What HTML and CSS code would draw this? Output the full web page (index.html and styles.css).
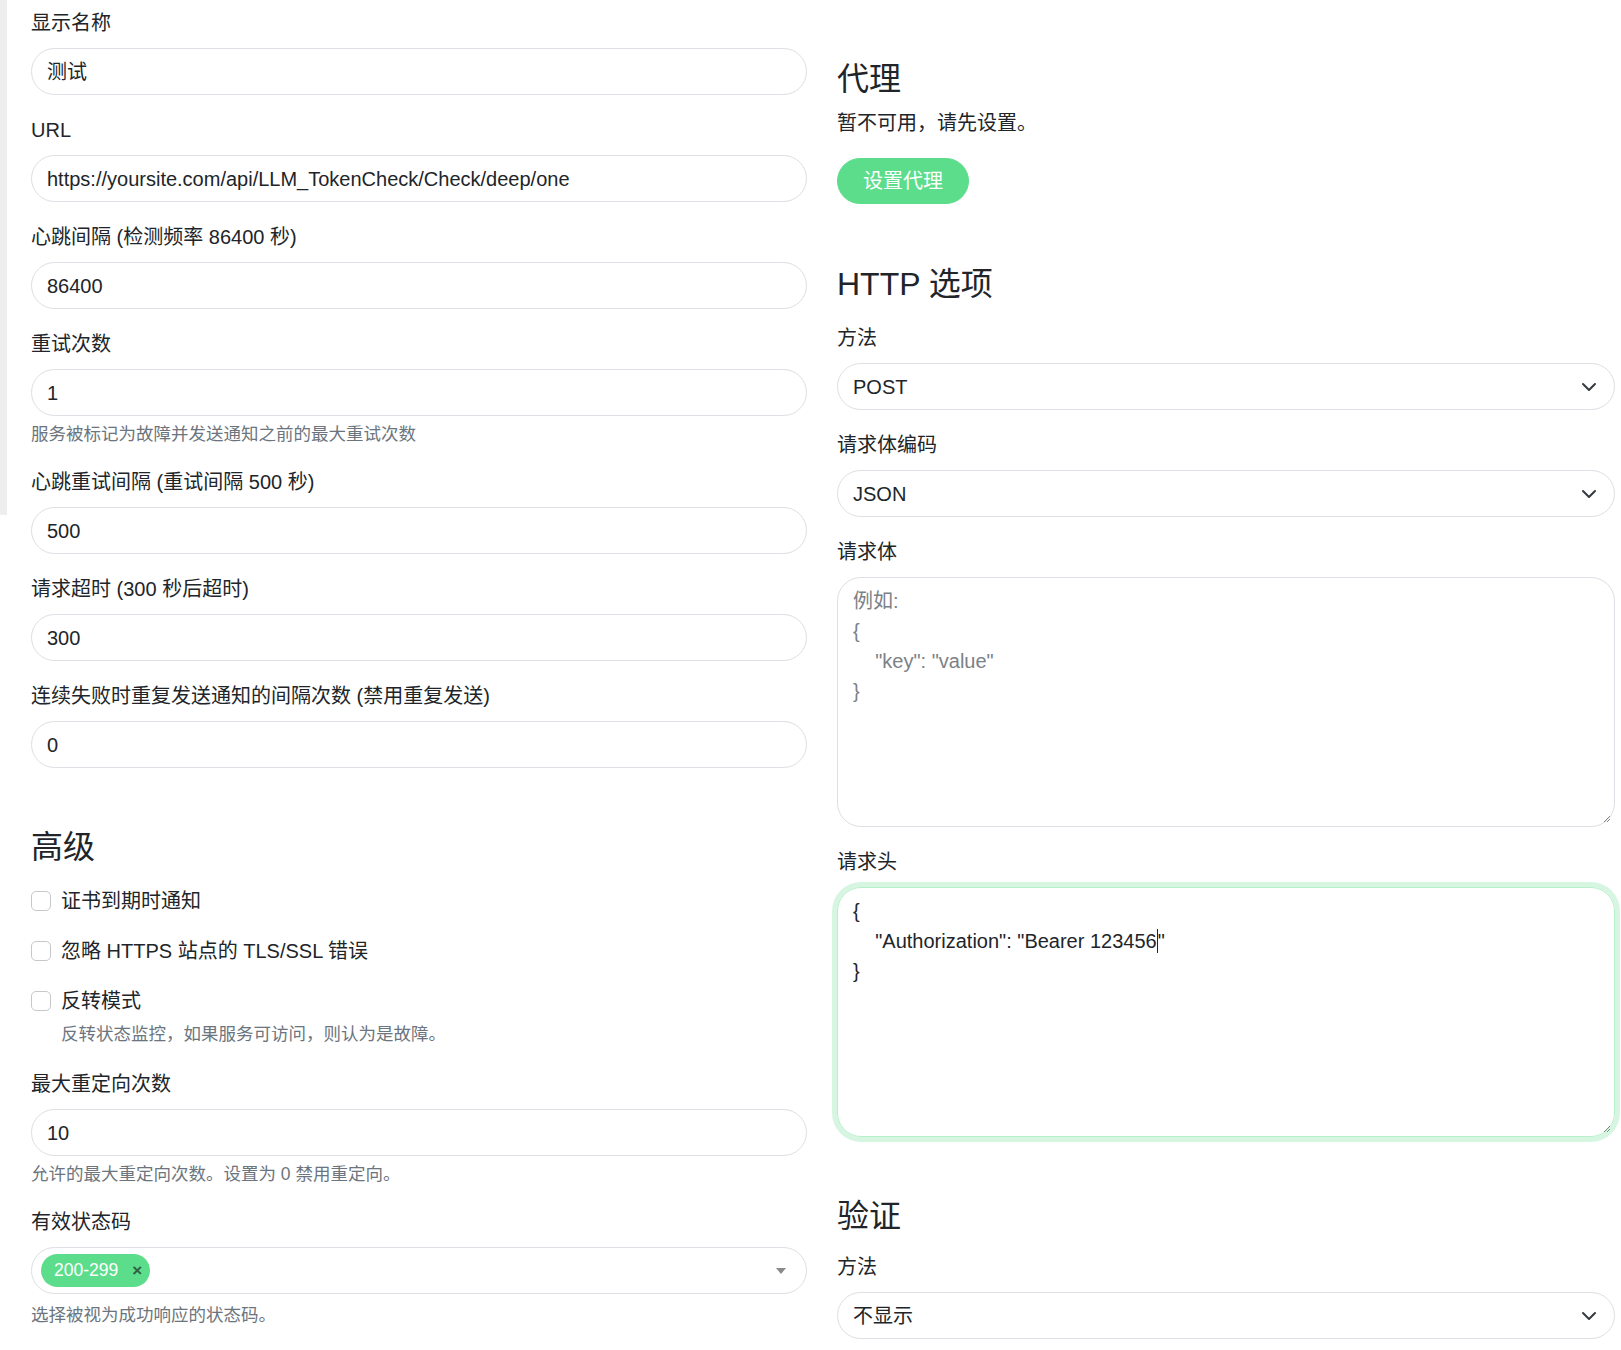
FILE: index.html
```html
<!DOCTYPE html>
<html lang="zh-CN">
<head>
<meta charset="utf-8">
<title>编辑监控项</title>
<link rel="stylesheet" href="styles.css">
</head>
<body>
<div class="page">
  <div class="strip"></div>
  <div class="main">
    <div class="col">
      <div class="field">
        <label class="label">显示名称</label>
        <div class="input">测试</div>
      </div>
      <div class="field">
        <label class="label">URL</label>
        <div class="input">https://yoursite.com/api/LLM_TokenCheck/Check/deep/one</div>
      </div>
      <div class="field">
        <label class="label">心跳间隔 (检测频率 86400 秒)</label>
        <div class="input">86400</div>
      </div>
      <div class="field">
        <label class="label">重试次数</label>
        <div class="input">1</div>
        <div class="help">服务被标记为故障并发送通知之前的最大重试次数</div>
      </div>
      <div class="field">
        <label class="label">心跳重试间隔 (重试间隔 500 秒)</label>
        <div class="input">500</div>
      </div>
      <div class="field">
        <label class="label">请求超时 (300 秒后超时)</label>
        <div class="input">300</div>
      </div>
      <div class="field">
        <label class="label">连续失败时重复发送通知的间隔次数 (禁用重复发送)</label>
        <div class="input">0</div>
      </div>

      <h2 class="section-title">高级</h2>

      <div class="check">
        <span class="box"></span>
        <div class="check-body">证书到期时通知</div>
      </div>
      <div class="check">
        <span class="box"></span>
        <div class="check-body">忽略 HTTPS 站点的 TLS/SSL 错误</div>
      </div>
      <div class="check check-last">
        <span class="box"></span>
        <div class="check-body">
          <div>反转模式</div>
          <div class="help">反转状态监控，如果服务可访问，则认为是故障。</div>
        </div>
      </div>

      <div class="field">
        <label class="label">最大重定向次数</label>
        <div class="input">10</div>
        <div class="help">允许的最大重定向次数。设置为 0 禁用重定向。</div>
      </div>
      <div class="field">
        <label class="label">有效状态码</label>
        <div class="multiselect">
          <span class="tag"><span>200-299</span><span class="tag-x">×</span></span>
          <span class="caret-down"></span>
        </div>
        <div class="help help-low">选择被视为成功响应的状态码。</div>
      </div>
    </div>

    <div class="col">
      <h2 class="section-title first">代理</h2>
      <p class="para">暂不可用，请先设置。</p>
      <button class="btn" type="button">设置代理</button>

      <h2 class="section-title http">HTTP 选项</h2>
      <div class="field field-y">
        <label class="label">方法</label>
        <div class="select">
          <span>POST</span>
          <svg class="chev" width="16" height="16" viewBox="0 0 16 16"><path d="M2 5l6 6 6-6" fill="none" stroke="#343a40" stroke-width="2" stroke-linecap="round" stroke-linejoin="round"/></svg>
        </div>
      </div>
      <div class="field field-y">
        <label class="label">请求体编码</label>
        <div class="select">
          <span>JSON</span>
          <svg class="chev" width="16" height="16" viewBox="0 0 16 16"><path d="M2 5l6 6 6-6" fill="none" stroke="#343a40" stroke-width="2" stroke-linecap="round" stroke-linejoin="round"/></svg>
        </div>
      </div>
      <div class="field field-y">
        <label class="label">请求体</label>
        <div class="textarea placeholder">例如:
{
    "key": "value"
}<svg class="grip" width="10" height="10" viewBox="0 0 10 10"><path d="M9 3L3 9M9 6L6 9" stroke="#888" stroke-width="1"/></svg></div>
      </div>
      <div class="field field-y">
        <label class="label">请求头</label>
        <div class="textarea focused">{
    "Authorization": "Bearer 123456<span class="cursor"></span>"
}<svg class="grip" width="10" height="10" viewBox="0 0 10 10"><path d="M9 3L3 9M9 6L6 9" stroke="#888" stroke-width="1"/></svg></div>
      </div>

      <h2 class="section-title">验证</h2>
      <div class="field field-y field-tight">
        <label class="label">方法</label>
        <div class="select">
          <span>不显示</span>
          <svg class="chev" width="16" height="16" viewBox="0 0 16 16"><path d="M2 5l6 6 6-6" fill="none" stroke="#343a40" stroke-width="2" stroke-linecap="round" stroke-linejoin="round"/></svg>
        </div>
      </div>
    </div>
  </div>
</div>
</body>
</html>
```

FILE: styles.css
```css
html, body {
  margin: 0;
  padding: 0;
}

body {
  font-family: "Liberation Sans", "Noto Sans CJK SC", sans-serif;
  font-size: 20px;
  line-height: 30px;
  color: #212529;
  background: #ffffff;
  overflow: hidden;
}

.page {
  display: flex;
  align-items: flex-start;
}

.strip {
  flex: none;
  width: 7px;
  height: 515px;
  background: #eeeeee;
}

.main {
  flex: 1;
  display: grid;
  grid-template-columns: 776px 778px;
  column-gap: 30px;
  padding: 8px 0 0 24px;
}

.col {
  min-width: 0;
}

.field {
  margin-bottom: 20px;
}

.field-y {
  margin-top: 20px;
}

.field-tight {
  margin-top: 17px;
}

.label {
  display: block;
  margin-bottom: 10px;
  line-height: 30px;
}

.input,
.select,
.multiselect {
  box-sizing: border-box;
  height: 47px;
  border: 1px solid #dcdfe3;
  border-radius: 24px;
  padding: 0 15px;
  display: flex;
  align-items: center;
  background: #fff;
  white-space: nowrap;
}

.select {
  justify-content: space-between;
  padding-right: 17px;
}

.chev {
  flex: none;
}

.help {
  margin-top: 5px;
  font-size: 17.5px;
  line-height: 26px;
  color: #6c757d;
}

.help-low {
  margin-top: 8px;
}

.section-title {
  font-size: 32px;
  line-height: 38px;
  font-weight: 400;
  margin: 60px 0 10px;
  color: #212529;
}

.section-title.first {
  margin-top: 52px;
}

.section-title.http {
  margin-top: 61px;
}

.para {
  margin: 0 0 20px;
}

.btn {
  display: inline-block;
  font-family: inherit;
  font-size: 20px;
  line-height: 30px;
  font-weight: 400;
  color: #fff;
  background: #5cdd8b;
  border: 1px solid #5cdd8b;
  border-radius: 24px;
  padding: 7px 25px;
  cursor: pointer;
}

.check {
  display: flex;
  align-items: flex-start;
  margin: 20px 0;
}

.check-last {
  margin-bottom: 22px;
}

.box {
  flex: none;
  box-sizing: border-box;
  width: 20px;
  height: 20px;
  margin-top: 5px;
  margin-right: 10px;
  border: 1px solid #c6c9cc;
  border-radius: 5px;
  background: #fff;
}

.check-body {
  line-height: 30px;
}

.textarea {
  position: relative;
  box-sizing: border-box;
  height: 250px;
  border: 1px solid #dcdfe3;
  border-radius: 24px;
  padding: 8px 15px;
  white-space: pre;
  line-height: 30px;
  color: #212529;
}

.textarea.placeholder {
  color: #7b8187;
}

.textarea.focused {
  border-color: #b7efcb;
  box-shadow: 0 0 0 5px rgba(92, 221, 139, 0.25);
}

.cursor {
  display: inline-block;
  width: 1px;
  height: 24px;
  background: #212529;
  vertical-align: -5px;
}

.grip {
  position: absolute;
  right: 3px;
  bottom: 3px;
}

.multiselect {
  padding: 0 20px 0 9px;
  justify-content: space-between;
}

.tag {
  display: inline-flex;
  align-items: center;
  height: 33px;
  box-sizing: border-box;
  padding: 0 8px 0 13px;
  border-radius: 17px;
  background: #5cdd8b;
  color: #fff;
  font-size: 17.5px;
  line-height: 33px;
  gap: 14px;
}

.tag-x {
  color: #2f5f40;
  font-size: 17px;
  font-weight: 700;
}

.caret-down {
  width: 0;
  height: 0;
  border-left: 5px solid transparent;
  border-right: 5px solid transparent;
  border-top: 6px solid #8a8a8a;
}
```
